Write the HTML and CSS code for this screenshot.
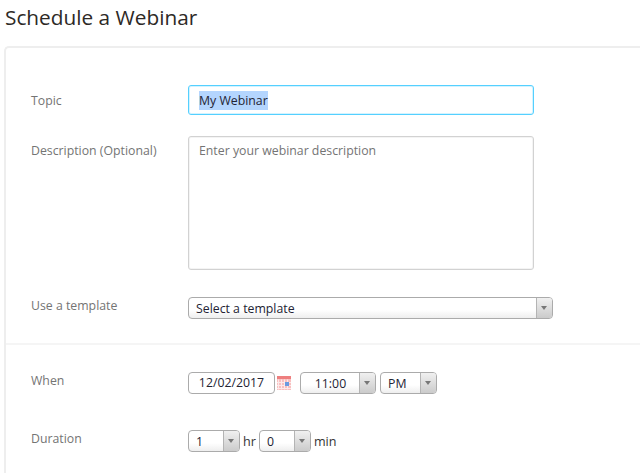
FILE: index.html
```html
<!DOCTYPE html>
<html lang="en">
<head>
    <meta charset="UTF-8">
    <meta name="viewport" content="width=device-width, initial-scale=1.0">
    <title>Schedule a Webinar</title>
    <link rel="stylesheet" href="styles.css">
</head>
<body>

    <h1 class="page-title">Schedule a Webinar</h1>

    <div class="panel">
        <div class="section section-top">
            <div class="row row-topic">
                <label class="row-label">Topic</label>
                <div class="field field-focus"><span class="selected">My Webinar</span></div>
            </div>
            <div class="row row-description">
                <label class="row-label">Description (Optional)</label>
                <div class="field field-area">Enter your webinar description</div>
            </div>
            <div class="row row-template">
                <label class="row-label">Use a template</label>
                <div class="select select-template">
                    <span class="select-value">Select a template</span>
                    <span class="select-arrow"></span>
                </div>
            </div>
        </div>

        <div class="section">
            <div class="row row-when">
                <label class="row-label">When</label>
                <div class="controls">
                    <div class="date-input">12/02/2017</div>
                    <svg class="calendar" width="14" height="14" viewBox="0 0 14 14">
                        <rect x="0" y="0" width="14" height="14" fill="#f9c0c0"/>
                        <rect x="0" y="0" width="14" height="3" fill="#ee7f7f"/>
                        <path d="M1.500 3.500v10M4.500 3.500v10M7.500 3.500v10M10.500 3.500v10M0 6.500h14M0 9.500h14M0 12.500h14" stroke="#fdeaea" stroke-width="1" fill="none"/>
                        <rect x="8" y="6" width="4" height="4" fill="#6b9be0"/>
                    </svg>
                    <div class="select select-time">
                        <span class="select-value">11:00</span>
                        <span class="select-arrow"></span>
                    </div>
                    <div class="select select-ampm">
                        <span class="select-value">PM</span>
                        <span class="select-arrow"></span>
                    </div>
                </div>
            </div>
            <div class="row row-duration">
                <label class="row-label">Duration</label>
                <div class="controls">
                    <div class="select select-small">
                        <span class="select-value">1</span>
                        <span class="select-arrow"></span>
                    </div>
                    <span class="unit">hr</span>
                    <div class="select select-small">
                        <span class="select-value">0</span>
                        <span class="select-arrow"></span>
                    </div>
                    <span class="unit">min</span>
                </div>
            </div>
        </div>
    </div>

</body>
</html>
```

FILE: styles.css
```css
html, body {
    overflow: hidden;
}

body {
    font-family: "Open Sans", Arial, sans-serif;
    margin: 0;
    padding: 0;
    background: #fff;
    color: #333;
    height: 473px;
}

.page-title {
    margin: 0;
    padding: 4px 0 0 5px;
    height: 46px;
    box-sizing: border-box;
    font-size: 20.8px;
    line-height: 27px;
    font-weight: 400;
    color: #2d2926;
}

.panel {
    margin-left: 4px;
    box-sizing: border-box;
    height: 427px;
    border: 2px solid #eeeeee;
    border-width: 2px 0 0 2px;
    border-top-left-radius: 5px;
}

.section {
    padding-left: 25px;
}

.section-top {
    padding-top: 37px;
    padding-bottom: 24px;
    border-bottom: 2px solid #f5f5f5;
}

.row {
    display: flex;
    align-items: flex-start;
}

.row-label {
    width: 157px;
    flex: none;
    font-size: 12.3px;
    line-height: 16px;
    color: #747474;
}

.row-topic {
    margin-bottom: 21px;
}

.row-topic .row-label {
    padding-top: 8px;
}

.row-description {
    margin-bottom: 27px;
}

.row-description .row-label {
    padding-top: 7px;
}

.row-template .row-label {
    padding-top: 1px;
}

.row-when {
    padding-top: 27px;
    margin-bottom: 36px;
}

.row-when .row-label,
.row-duration .row-label {
    padding-top: 1px;
}

.field {
    width: 346px;
    box-sizing: border-box;
    border-radius: 3px;
    font-size: 12.3px;
    background: #fff;
}

.field-focus {
    height: 30px;
    border: 1px solid #55d0ff;
    box-shadow: inset 0 0 0 1px rgba(85, 208, 255, 0.25);
    padding: 0 10px;
    line-height: 29px;
    color: #232333;
}

.selected {
    background: #b4d5fe;
    padding: 1px 0;
}

.field-area {
    height: 134px;
    border: 1px solid #d2d2d2;
    box-shadow: inset 0 0 0 1px rgba(210, 210, 210, 0.25);
    padding: 5px 10px;
    line-height: 18px;
    color: #747474;
}

.controls {
    display: flex;
    align-items: center;
}

.select {
    display: flex;
    box-sizing: border-box;
    height: 22px;
    border: 1px solid #ababab;
    border-radius: 4px;
    background: linear-gradient(#fff 60%, #eee);
    font-size: 12.3px;
    line-height: 22px;
    color: #232333;
}

.select-value {
    flex: 1;
    padding-left: 7px;
}

.select-arrow {
    width: 15px;
    flex: none;
    position: relative;
    border-left: 1px solid #b4b4b4;
    border-radius: 0 3px 3px 0;
    background: linear-gradient(#f0f0f0, #cbcbcb);
}

.select-arrow::after {
    content: "";
    position: absolute;
    left: 4px;
    top: 8px;
    border-left: 3px solid transparent;
    border-right: 3px solid transparent;
    border-top: 4px solid #777;
}

.select-template {
    width: 365px;
}

.date-input {
    box-sizing: border-box;
    width: 87px;
    height: 22px;
    border: 1px solid #ababab;
    border-radius: 4px;
    font-size: 12.3px;
    line-height: 20px;
    text-align: center;
    color: #232333;
}

.calendar {
    margin-left: 2px;
}

.select-time {
    width: 76px;
    margin-left: 9px;
}

.select-time .select-value {
    text-align: center;
    padding-left: 1px;
}

.select-ampm {
    width: 57px;
    margin-left: 4px;
}

.select-small {
    width: 52px;
}

.unit {
    font-size: 12.6px;
    color: #333;
    margin: 0 3px 0 3px;
}
```
